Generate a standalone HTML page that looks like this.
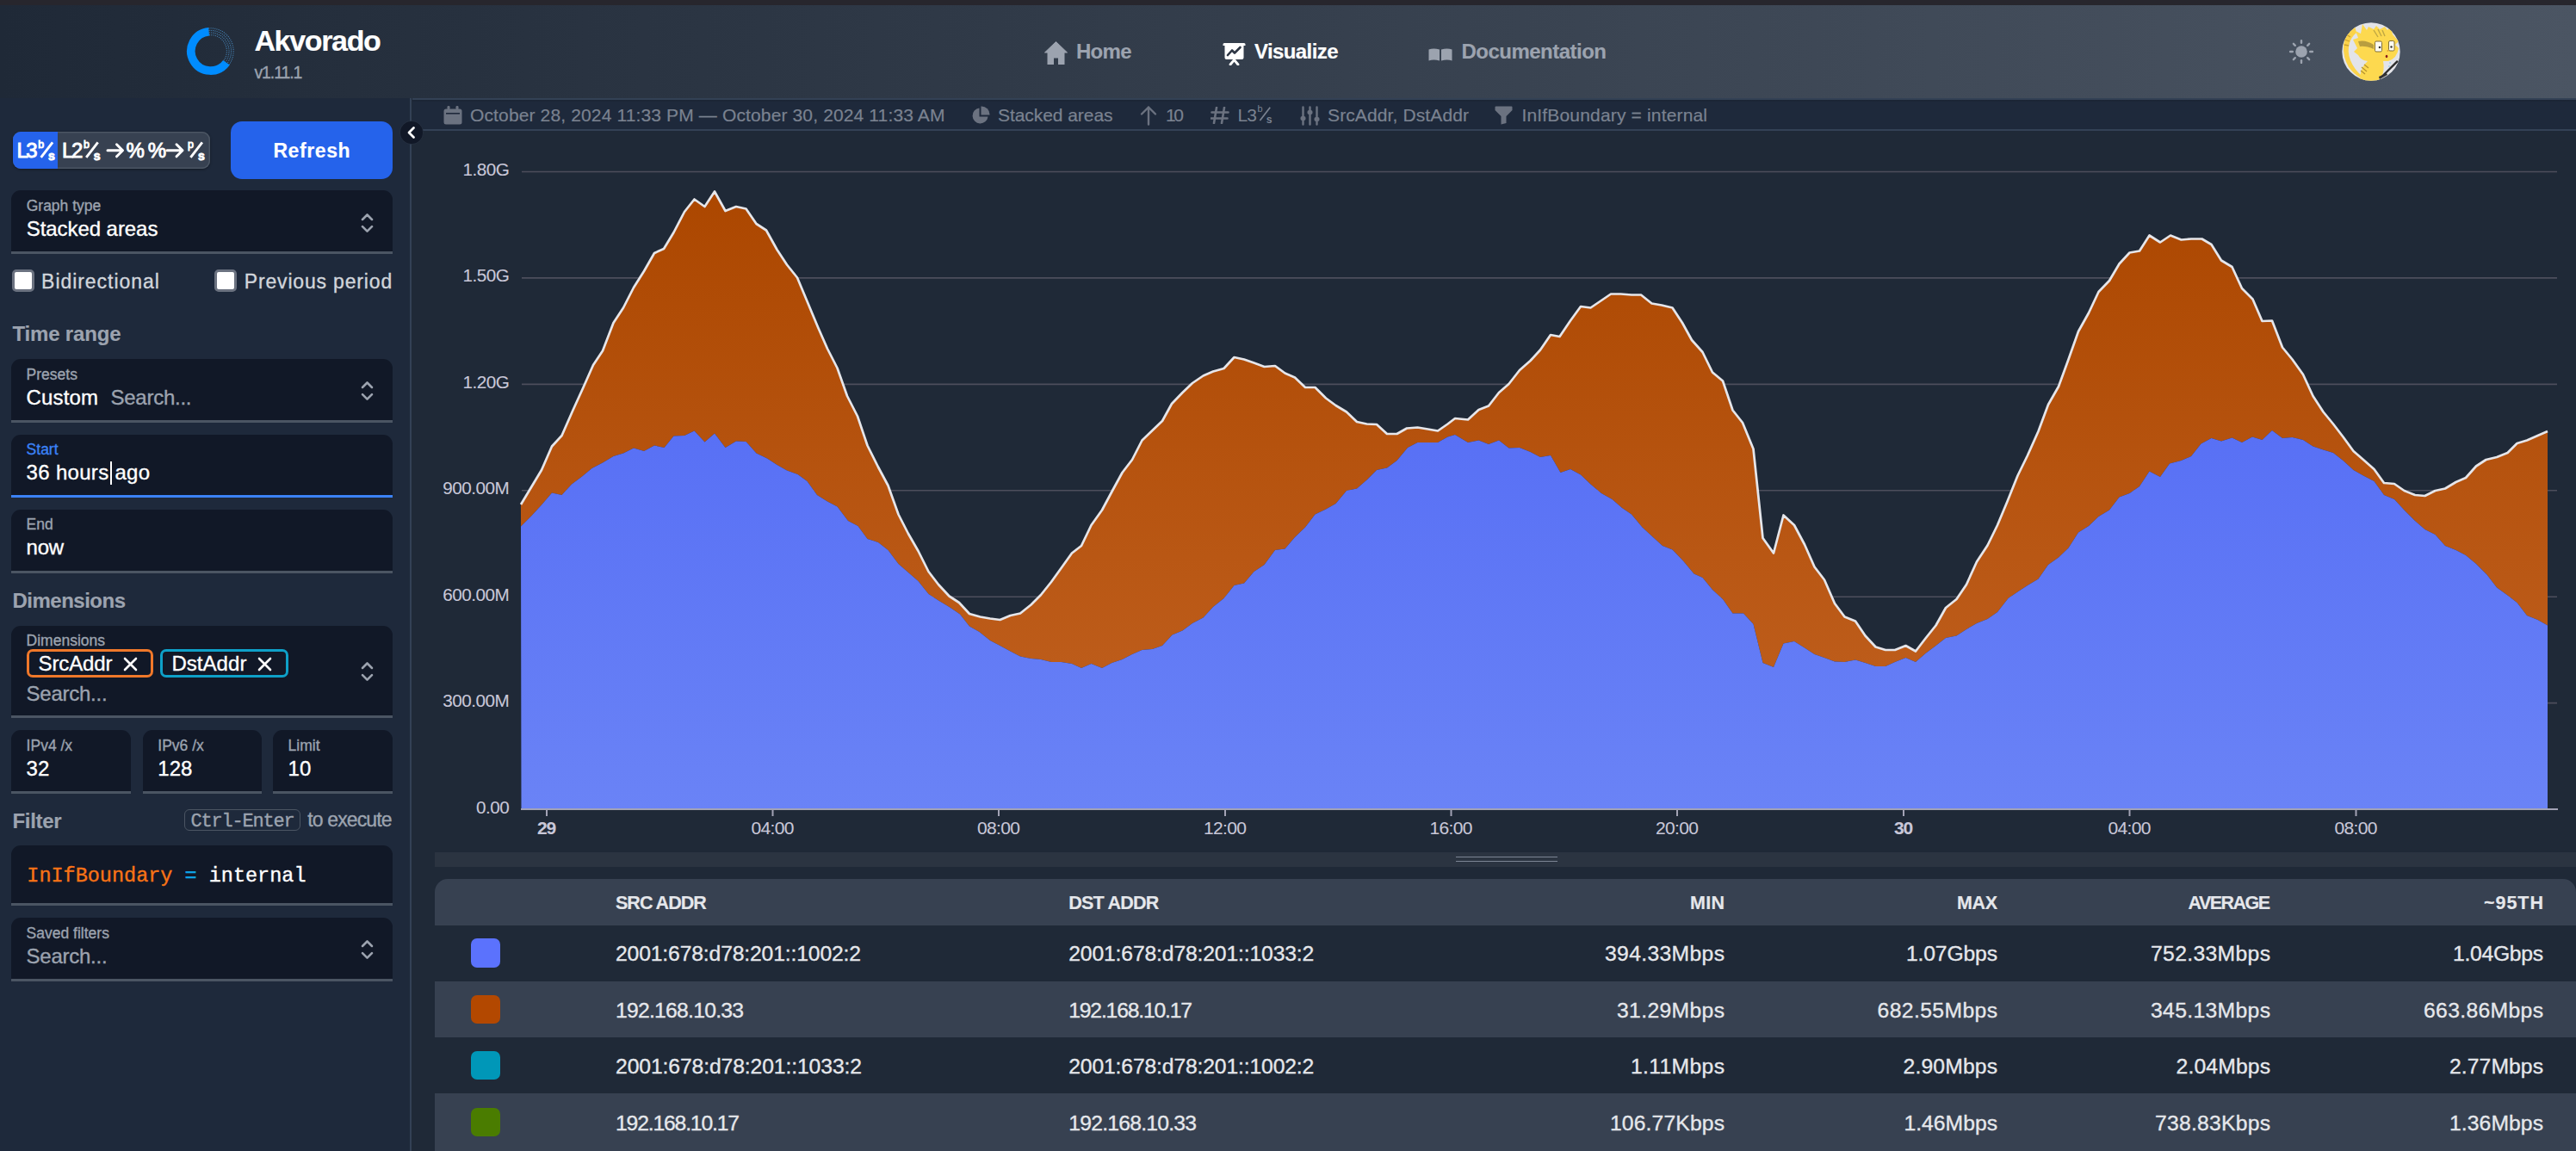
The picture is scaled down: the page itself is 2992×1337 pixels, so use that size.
<!DOCTYPE html><html><head><meta charset="utf-8"><title>Akvorado</title><style>html,body{margin:0;padding:0;width:2992px;height:1337px;overflow:hidden;background:#1f2937;font-family:"Liberation Sans",sans-serif;}.a{position:absolute;}.t{position:absolute;white-space:nowrap;}</style></head><body>
<div class="a" style="left:0.00px;top:0.00px;width:2992.00px;height:6.00px;background:#27262d;"></div>
<div class="a" style="left:0.00px;top:6.00px;width:2992.00px;height:108.00px;background:linear-gradient(to right,#1f2937,#4b5563);"></div>
<div class="a" style="left:0.00px;top:114.00px;width:477.00px;height:1223.00px;background:#1e293b;"></div>
<div class="a" style="left:476.00px;top:114.00px;width:2.20px;height:1223.00px;background:#334155;"></div>
<div class="a" style="left:479.00px;top:114.00px;width:2513.00px;height:36.00px;background:#1e293b;"></div>
<div class="a" style="left:479.00px;top:150.20px;width:2513.00px;height:1.50px;background:#334155;"></div>
<div class="a" style="left:479.00px;top:114.30px;width:2513.00px;height:1.30px;background:#334155;"></div>
<div class="a" style="left:479.00px;top:115.60px;width:2513.00px;height:3.90px;background:linear-gradient(to bottom,rgba(0,0,0,0.13),rgba(0,0,0,0));"></div>
<svg class="a" style="left:170.00px;top:20.00px;" width="150.00" height="80.00" viewBox="0 0 150 80"><path d="M92.96,52.74 A22.7,22.7 0 1 1 72.62,16.79" fill="none" stroke="#008cff" stroke-width="9.6"/><path d="M72.96,20.67 A18.8,18.8 0 0 1 89.81,50.45" fill="none" stroke="#4f9ad6" stroke-opacity="0.75" stroke-width="1.1" stroke-dasharray="1.1 1.2"/><path d="M72.73,18.08 A21.4,21.4 0 0 1 91.91,51.98" fill="none" stroke="#4f9ad6" stroke-opacity="0.75" stroke-width="1.1" stroke-dasharray="1.1 1.2"/><path d="M72.51,15.49 A24.0,24.0 0 0 1 94.02,53.51" fill="none" stroke="#4f9ad6" stroke-opacity="0.75" stroke-width="1.1" stroke-dasharray="1.1 1.2"/><path d="M72.28,12.90 A26.6,26.6 0 0 1 96.12,55.04" fill="none" stroke="#4f9ad6" stroke-opacity="0.75" stroke-width="1.1" stroke-dasharray="1.1 1.2"/></svg>
<svg class="a" style="left:1213.00px;top:47.50px;" width="27.00" height="27.50" viewBox="0 0 27 27.5"><path d="M13.5 0.5 L26.5 13 L23 13 L23 27 L16.5 27 L16.5 19 L10.5 19 L10.5 27 L4 27 L4 13 L0.5 13 Z" fill="#9ca3af" stroke="#9ca3af" stroke-width="1" stroke-linejoin="round"/></svg>
<svg class="a" style="left:1419.50px;top:49.50px;" width="27.00" height="26.00" viewBox="0 0 27 26"><path d="M0.5 1.5 Q0.5 0 2 0 L25 0 Q26.5 0 26.5 1.5 L26.5 3 L24.5 3 L24.5 17 Q24.5 19 22.5 19 L4.5 19 Q2.5 19 2.5 17 L2.5 3 L0.5 3 Z" fill="#ffffff"/><path d="M6 14 L11 8.5 L14 11.5 L20.5 5" fill="none" stroke="#2d3644" stroke-width="2.6" stroke-linecap="round" stroke-linejoin="round"/><path d="M9 25 L13.5 19.5 L18 25" fill="none" stroke="#ffffff" stroke-width="2.8" stroke-linecap="round"/></svg>
<svg class="a" style="left:1659.00px;top:56.00px;" width="28.00" height="15.00" viewBox="0 0 28 15"><path d="M0.5 1.5 Q6 -0.5 13 1.5 L13 14.5 Q6 12.5 0.5 14.5 Z M15 1.5 Q22 -0.5 27.5 1.5 L27.5 14.5 Q22 12.5 15 14.5 Z" fill="#9ca3af"/></svg>
<svg class="a" style="left:2657.70px;top:44.70px;" width="30.00" height="30.00" viewBox="0 0 30 30"><circle cx="15" cy="15" r="6.8" fill="#9ca3af"/><line x1="15.00" y1="4.80" x2="15.00" y2="2.10" stroke="#9ca3af" stroke-width="2.4" stroke-linecap="round"/><line x1="22.21" y1="7.79" x2="24.12" y2="5.88" stroke="#9ca3af" stroke-width="2.4" stroke-linecap="round"/><line x1="25.20" y1="15.00" x2="27.90" y2="15.00" stroke="#9ca3af" stroke-width="2.4" stroke-linecap="round"/><line x1="22.21" y1="22.21" x2="24.12" y2="24.12" stroke="#9ca3af" stroke-width="2.4" stroke-linecap="round"/><line x1="15.00" y1="25.20" x2="15.00" y2="27.90" stroke="#9ca3af" stroke-width="2.4" stroke-linecap="round"/><line x1="7.79" y1="22.21" x2="5.88" y2="24.12" stroke="#9ca3af" stroke-width="2.4" stroke-linecap="round"/><line x1="4.80" y1="15.00" x2="2.10" y2="15.00" stroke="#9ca3af" stroke-width="2.4" stroke-linecap="round"/><line x1="7.79" y1="7.79" x2="5.88" y2="5.88" stroke="#9ca3af" stroke-width="2.4" stroke-linecap="round"/></svg>
<svg class="a" style="left:2719.90px;top:26.00px;" width="68.00" height="68.00" viewBox="0 0 68 68"><defs><clipPath id="avc"><circle cx="34" cy="34" r="33.7"/></clipPath></defs><g clip-path="url(#avc)"><rect width="68" height="68" fill="#e3e4e9"/><path d="M15 4 Q4 12 2 26 Q1 40 8 52 Q14 60 21 64 L23 62 Q14 54 10 44 Q6 34 9 24 Q11 17 17 12 Z" fill="#fbd34a"/><path d="M5 14 L10 17 M3 20 L9 22 M3 26 L8 27" stroke="#c9a030" stroke-width="1.3"/><path d="M13 20 L19 18 L16 10 L22 13 L24 2 L29 9 L31 5 L37 8 L40 4 L44 8 L50 5 L53 9 L57 5 L59 14 L66 22 L62 26 L66 30 Q64 42 54 45 L30 45 Q22 44 19 38 L14 34 L18 30 Z" fill="#fdd94f"/><path d="M19 22 Q28 20 37 26 L37 31 Q28 27 21 28 Z" fill="#a08a3a" opacity="0.75"/><path d="M37 9 L42 17 M42 8 L46 16 M47 9 L50 16" stroke="#b09a40" stroke-width="1.4" opacity="0.8"/><path d="M21 64 Q22 52 30 45 L48 45 Q50 55 46 64 L42 68 L22 68 Z" fill="#fdd94f"/><path d="M22 56 L27 60 M23 52 L29 57 M26 49 L31 53" stroke="#b89530" stroke-width="1.4"/><rect x="38.5" y="22" width="8" height="12" rx="1.5" fill="#fffdf0" stroke="#6f5f30" stroke-width="0.9"/><rect x="54.5" y="21.5" width="6.5" height="11.5" rx="1.5" fill="#fffdf0" stroke="#6f5f30" stroke-width="0.9"/><circle cx="44" cy="29" r="1.3" fill="#333"/><circle cx="57.5" cy="28.5" r="1.2" fill="#333"/><circle cx="53.4" cy="33" r="0.9" fill="#e8a030"/><ellipse cx="52" cy="39.5" rx="1.3" ry="1.7" fill="#8b1a1a"/><circle cx="56" cy="47" r="0.8" fill="#7cc7ee"/><circle cx="55" cy="51" r="0.8" fill="#7cc7ee"/><circle cx="54" cy="55" r="0.8" fill="#7cc7ee"/><path d="M64 44 L66 45.5 L47 64 L43 65 Z" fill="#2b2b2b"/><path d="M43 63 L52 59 L53 61 L44 66 Z" fill="#333"/></g></svg>
<svg class="a" style="left:514.50px;top:122.50px;" width="22.00" height="22.00" viewBox="0 0 22 22"><path d="M3 3.5 L19 3.5 Q21.5 3.5 21.5 6 L21.5 19 Q21.5 21.5 19 21.5 L3 21.5 Q0.5 21.5 0.5 19 L0.5 6 Q0.5 3.5 3 3.5 Z" fill="#6b7280"/><rect x="4.5" y="0" width="3" height="6" rx="1.2" fill="#6b7280"/><rect x="14.5" y="0" width="3" height="6" rx="1.2" fill="#6b7280"/><rect x="3" y="8" width="16" height="1.6" fill="#1e293b"/></svg>
<svg class="a" style="left:1127.50px;top:122.50px;" width="22.00" height="22.00" viewBox="0 0 22 22"><path d="M9.5 2.5 A9 9 0 1 0 19.5 12.5 L9.5 12.5 Z" fill="#6b7280"/><path d="M11.5 0.5 A9.5 9.5 0 0 1 21.5 10.5 L11.5 10.5 Z" fill="#6b7280"/></svg>
<svg class="a" style="left:1324.00px;top:122.00px;" width="20.00" height="24.00" viewBox="0 0 20 24"><path d="M10 22.5 L10 2.5 M2 10.5 L10 2.5 L18 10.5" fill="none" stroke="#6b7280" stroke-width="2.4" stroke-linecap="round" stroke-linejoin="round"/></svg>
<svg class="a" style="left:1406.00px;top:124.00px;" width="22.00" height="20.00" viewBox="0 0 22 20"><path d="M7 1 L4 19 M16 1 L13 19 M1.5 6.5 L20.5 6.5 M0.5 13.5 L19.5 13.5" fill="none" stroke="#6b7280" stroke-width="2.6" stroke-linecap="round"/></svg>
<svg class="a" style="left:1510.00px;top:122.50px;" width="23.00" height="23.00" viewBox="0 0 23 23"><path d="M3.5 1.5 L3.5 21.5 M11.5 1.5 L11.5 21.5 M19.5 1.5 L19.5 21.5" stroke="#6b7280" stroke-width="2.4" stroke-linecap="round"/><rect x="0.5" y="12" width="6" height="5" rx="2" fill="#6b7280"/><rect x="8.5" y="5" width="6" height="5" rx="2" fill="#6b7280"/><rect x="16.5" y="13" width="6" height="5" rx="2" fill="#6b7280"/></svg>
<svg class="a" style="left:1736.00px;top:122.50px;" width="21.00" height="22.00" viewBox="0 0 21 22"><path d="M0.5 1.5 Q0.5 0.5 1.5 0.5 L19.5 0.5 Q20.5 0.5 20.5 1.5 L20.5 5 L13.5 12 L13.5 20 L7.5 21.5 L7.5 12 L0.5 5 Z" fill="#6b7280"/></svg>
<svg class="a" style="left:464.00px;top:140.00px;" width="28.00" height="28.00" viewBox="0 0 28 28"><circle cx="14" cy="14" r="13.6" fill="#111827" stroke="#3a4556" stroke-opacity="0.5" stroke-width="0.8"/><path d="M16.5 8.5 L11 14 L16.5 19.5" fill="none" stroke="#fff" stroke-width="2.8" stroke-linecap="round" stroke-linejoin="round"/></svg>
<div class="a" style="left:14.6px;top:152.9px;width:229px;height:42.7px;border-radius:9px;background:#374151;box-shadow:inset 0 0 0 1.5px #4b5563,0 1px 3px rgba(0,0,0,0.4);overflow:hidden"><div class="a" style="left:0;top:0;width:52.8px;height:42.7px;background:#2563eb"></div></div>
<div class="a" style="left:268px;top:140.7px;width:188px;height:67px;border-radius:13px;background:#2563eb"></div>
<div class="a" style="left:13.3px;top:221.2px;width:442.7px;height:70.80000000000001px;background:#111827;border-radius:11px 11px 0 0;border-bottom:3px solid #4b5563"></div>
<svg class="a" style="left:418.50px;top:246.50px;" width="15.00" height="24.20" viewBox="0 0 15 24.2"><path d="M2 8 L7.5 2.5 L13 8 M2 16.2 L7.5 21.7 L13 16.2" fill="none" stroke="#9ca3af" stroke-width="2.6" stroke-linecap="round" stroke-linejoin="round"/></svg>
<div class="a" style="left:14px;top:312.5px;width:20px;height:20px;background:#ffffff;border:3px solid #6b7280;border-radius:5px"></div>
<div class="a" style="left:249.4px;top:312.5px;width:20px;height:20px;background:#ffffff;border:3px solid #6b7280;border-radius:5px"></div>
<div class="a" style="left:13.3px;top:417px;width:442.7px;height:70.69999999999999px;background:#111827;border-radius:11px 11px 0 0;border-bottom:3px solid #4b5563"></div>
<svg class="a" style="left:418.50px;top:441.50px;" width="15.00" height="24.20" viewBox="0 0 15 24.2"><path d="M2 8 L7.5 2.5 L13 8 M2 16.2 L7.5 21.7 L13 16.2" fill="none" stroke="#9ca3af" stroke-width="2.6" stroke-linecap="round" stroke-linejoin="round"/></svg>
<div class="a" style="left:13.3px;top:504.6px;width:442.7px;height:70.09999999999994px;background:#111827;border-radius:11px 11px 0 0;border-bottom:3.6px solid #3b82f6"></div>
<div class="a" style="left:128.00px;top:536.00px;width:1.80px;height:27.00px;background:#ffffff;"></div>
<div class="a" style="left:13.3px;top:592.2px;width:442.7px;height:70.79999999999995px;background:#111827;border-radius:11px 11px 0 0;border-bottom:3px solid #4b5563"></div>
<div class="a" style="left:13.3px;top:727.3px;width:442.7px;height:103.5px;background:#111827;border-radius:11px 11px 0 0;border-bottom:3px solid #4b5563"></div>
<div class="a" style="left:30.6px;top:753.7px;width:141.4px;height:27.3px;border:3px solid #f0782a;border-radius:7px"></div>
<svg class="a" style="left:143.00px;top:763.00px;" width="17.00" height="17.00" viewBox="0 0 17 17"><path d="M2 2 L15 15 M15 2 L2 15" stroke="#ffffff" stroke-width="2.6" stroke-linecap="round"/></svg>
<div class="a" style="left:185.5px;top:753.7px;width:143px;height:27.3px;border:3px solid #0ea0c8;border-radius:7px"></div>
<svg class="a" style="left:298.50px;top:763.00px;" width="17.00" height="17.00" viewBox="0 0 17 17"><path d="M2 2 L15 15 M15 2 L2 15" stroke="#ffffff" stroke-width="2.6" stroke-linecap="round"/></svg>
<svg class="a" style="left:418.50px;top:768.40px;" width="15.00" height="24.20" viewBox="0 0 15 24.2"><path d="M2 8 L7.5 2.5 L13 8 M2 16.2 L7.5 21.7 L13 16.2" fill="none" stroke="#9ca3af" stroke-width="2.6" stroke-linecap="round" stroke-linejoin="round"/></svg>
<div class="a" style="left:13.3px;top:848.2px;width:139.1px;height:70.79999999999995px;background:#111827;border-radius:11px 11px 0 0;border-bottom:3px solid #4b5563"></div>
<div class="a" style="left:166px;top:848.2px;width:138px;height:70.79999999999995px;background:#111827;border-radius:11px 11px 0 0;border-bottom:3px solid #4b5563"></div>
<div class="a" style="left:317.3px;top:848.2px;width:138.7px;height:70.79999999999995px;background:#111827;border-radius:11px 11px 0 0;border-bottom:3px solid #4b5563"></div>
<div class="a" style="left:213.6px;top:939.5px;width:133.8px;height:23.1px;border:1.5px solid #4b5563;border-radius:6px"></div>
<div class="a" style="left:13.3px;top:982.1px;width:442.7px;height:67.19999999999993px;background:#111827;border-radius:11px 11px 0 0;border-bottom:3px solid #4b5563"></div>
<div class="a" style="left:13.3px;top:1065.7px;width:442.7px;height:70.89999999999986px;background:#111827;border-radius:11px 11px 0 0;border-bottom:3px solid #4b5563"></div>
<svg class="a" style="left:418.50px;top:1091.00px;" width="15.00" height="24.20" viewBox="0 0 15 24.2"><path d="M2 8 L7.5 2.5 L13 8 M2 16.2 L7.5 21.7 L13 16.2" fill="none" stroke="#9ca3af" stroke-width="2.6" stroke-linecap="round" stroke-linejoin="round"/></svg>
<svg class="a" style="left:0.00px;top:0.00px;" width="2992.00" height="1337.00" viewBox="0 0 2992 1337"><defs><linearGradient id="gb" x1="0" y1="0" x2="0" y2="1"><stop offset="0" stop-color="#5870f5"/><stop offset="1" stop-color="#6a83f6"/></linearGradient><linearGradient id="go" x1="0" y1="0" x2="0" y2="1"><stop offset="0" stop-color="#ac4700"/><stop offset="1" stop-color="#bd5c1a"/></linearGradient></defs><line x1="606" y1="199.50" x2="2970" y2="199.50" stroke="#4d4e5c" stroke-width="1.6"/><line x1="606" y1="322.92" x2="2970" y2="322.92" stroke="#4d4e5c" stroke-width="1.6"/><line x1="606" y1="446.34" x2="2970" y2="446.34" stroke="#4d4e5c" stroke-width="1.6"/><line x1="606" y1="569.76" x2="2970" y2="569.76" stroke="#4d4e5c" stroke-width="1.6"/><line x1="606" y1="693.18" x2="2970" y2="693.18" stroke="#4d4e5c" stroke-width="1.6"/><line x1="606" y1="816.60" x2="2970" y2="816.60" stroke="#4d4e5c" stroke-width="1.6"/><path d="M605.0,586.0 L629.0,546.0 L641.0,518.5 L652.5,506.0 L665.0,477.5 L677.5,450.0 L689.0,424.0 L700.0,407.5 L712.5,375.0 L724.0,357.5 L736.0,334.0 L748.0,315.0 L760.0,294.0 L771.0,289.0 L782.5,270.0 L795.0,246.0 L806.5,231.5 L818.5,240.0 L830.0,222.5 L842.5,245.0 L855.0,240.0 L866.5,242.5 L878.5,260.0 L890.0,267.5 L902.5,290.0 L914.0,307.5 L926.0,322.5 L937.5,350.0 L950.0,380.0 L961.0,405.0 L972.5,427.5 L984.0,460.0 L996.0,483.5 L1007.5,517.5 L1020.0,542.5 L1031.5,564.0 L1043.5,597.5 L1055.0,620.0 L1066.5,640.0 L1078.5,664.0 L1090.0,679.0 L1102.5,692.5 L1114.0,700.0 L1126.0,713.0 L1138.5,716.5 L1150.0,718.5 L1161.5,720.0 L1173.5,715.0 L1185.0,712.5 L1197.5,702.5 L1209.0,691.0 L1221.0,676.0 L1232.5,660.0 L1245.0,642.5 L1256.0,634.0 L1267.5,610.0 L1280.0,592.5 L1291.5,571.0 L1303.5,549.0 L1315.0,534.0 L1326.5,511.5 L1338.5,500.0 L1350.0,489.0 L1361.0,469.0 L1373.5,456.0 L1385.0,445.0 L1397.5,436.5 L1409.0,431.5 L1421.5,428.0 L1433.5,415.0 L1445.0,417.5 L1456.5,421.5 L1468.5,426.0 L1481.0,425.0 L1492.5,433.5 L1504.0,438.5 L1516.0,450.0 L1527.5,450.0 L1540.0,462.5 L1551.5,471.0 L1564.0,478.5 L1576.0,490.0 L1587.5,492.5 L1599.0,493.0 L1611.0,504.0 L1622.5,504.0 L1634.0,497.5 L1646.5,496.5 L1658.5,498.5 L1670.0,500.5 L1681.5,492.5 L1690.0,486.0 L1705.0,487.5 L1717.5,476.0 L1729.0,471.5 L1741.0,456.0 L1752.5,446.0 L1765.0,430.0 L1777.5,419.0 L1789.0,406.5 L1801.0,389.0 L1811.5,391.0 L1824.0,372.5 L1836.0,356.0 L1847.5,357.5 L1860.0,349.0 L1871.0,341.5 L1882.5,341.5 L1895.0,342.5 L1906.0,342.5 L1918.5,352.5 L1930.0,354.5 L1942.5,357.5 L1954.0,375.0 L1965.0,395.0 L1977.5,409.0 L1989.0,432.5 L2001.0,442.5 L2012.5,476.5 L2024.0,491.0 L2036.5,521.5 L2047.5,625.0 L2060.0,642.5 L2071.5,598.5 L2084.0,610.0 L2096.0,632.5 L2107.5,658.5 L2119.0,673.5 L2131.0,701.0 L2142.5,716.5 L2155.0,721.5 L2166.5,738.5 L2178.5,751.5 L2190.0,755.0 L2201.0,755.0 L2213.5,750.0 L2225.0,756.5 L2236.5,741.5 L2248.5,726.5 L2260.0,706.0 L2272.5,696.0 L2284.0,679.0 L2296.0,652.5 L2308.5,633.5 L2320.0,610.0 L2331.5,582.5 L2343.5,552.5 L2355.0,529.0 L2367.5,501.0 L2379.0,470.0 L2391.0,449.0 L2402.5,417.5 L2414.0,385.0 L2426.0,363.5 L2437.5,339.0 L2450.0,326.0 L2461.5,306.5 L2473.5,293.5 L2485.0,291.5 L2496.5,273.5 L2509.0,281.5 L2521.0,273.5 L2533.5,278.5 L2545.0,277.5 L2557.5,277.5 L2568.5,284.0 L2580.0,302.5 L2592.5,310.0 L2604.0,335.0 L2616.5,347.5 L2627.5,373.0 L2639.0,372.5 L2651.0,403.5 L2662.5,417.5 L2675.0,435.0 L2686.5,460.0 L2698.5,478.5 L2710.0,492.5 L2721.5,507.5 L2733.5,524.0 L2745.0,534.0 L2757.5,545.0 L2769.0,561.0 L2781.0,562.0 L2792.5,570.0 L2805.0,575.0 L2816.5,576.0 L2828.5,570.0 L2840.0,567.5 L2852.5,560.0 L2864.0,555.0 L2876.0,541.5 L2887.5,534.0 L2900.0,531.0 L2912.5,526.0 L2923.5,515.0 L2935.0,511.5 L2947.5,506.0 L2959.0,501.0 L2959.0,726.5 L2947.5,720.0 L2935.0,715.0 L2923.5,700.0 L2912.5,691.5 L2900.0,682.5 L2888.5,667.5 L2876.0,655.0 L2864.0,645.0 L2852.5,639.0 L2840.0,634.0 L2828.5,621.0 L2816.5,615.0 L2805.0,605.0 L2792.5,592.5 L2781.0,580.0 L2769.0,575.0 L2757.5,559.0 L2745.0,552.5 L2733.5,546.0 L2721.5,535.0 L2710.0,526.0 L2698.5,522.5 L2686.5,518.5 L2675.0,511.0 L2662.5,508.0 L2651.0,509.0 L2639.0,500.0 L2627.5,511.0 L2616.0,507.5 L2604.0,514.0 L2592.5,508.5 L2580.0,512.5 L2568.5,509.0 L2556.5,515.5 L2545.0,530.0 L2533.5,535.0 L2520.0,538.5 L2509.0,554.0 L2496.5,547.5 L2485.0,565.0 L2473.5,573.0 L2461.5,577.5 L2450.0,592.5 L2437.5,600.0 L2426.0,611.0 L2414.0,618.5 L2402.5,636.5 L2391.0,647.5 L2379.0,656.0 L2367.5,672.5 L2355.0,680.0 L2343.5,687.5 L2332.5,695.0 L2320.0,711.0 L2308.5,719.0 L2296.0,724.0 L2284.0,731.0 L2272.5,738.5 L2260.0,741.0 L2248.5,750.0 L2236.5,759.0 L2225.0,769.0 L2213.5,764.0 L2201.0,769.0 L2190.0,774.0 L2178.5,774.0 L2166.5,770.0 L2155.0,766.5 L2142.5,769.0 L2131.0,768.5 L2119.0,764.0 L2107.5,760.0 L2096.0,752.5 L2084.0,745.0 L2071.5,747.5 L2060.0,775.0 L2047.5,770.0 L2036.5,725.0 L2025.0,712.5 L2012.5,712.5 L2001.0,696.0 L1989.0,685.0 L1977.5,671.0 L1967.5,666.5 L1955.0,651.5 L1942.5,638.5 L1931.0,634.0 L1920.0,624.0 L1907.5,612.5 L1895.0,597.5 L1884.0,590.0 L1872.5,580.0 L1860.0,573.0 L1847.5,562.5 L1836.0,551.5 L1824.0,545.0 L1812.5,549.0 L1801.0,529.0 L1789.0,531.0 L1777.5,525.0 L1765.0,520.0 L1752.5,520.5 L1741.0,511.5 L1729.0,516.0 L1717.5,511.5 L1705.0,514.0 L1690.0,505.0 L1681.5,507.5 L1670.0,514.0 L1658.5,514.0 L1646.5,514.0 L1635.0,520.0 L1622.5,535.0 L1611.0,543.5 L1599.0,546.0 L1587.5,557.5 L1576.0,567.5 L1564.0,570.0 L1551.5,585.0 L1540.0,591.5 L1527.5,597.5 L1516.0,612.5 L1504.0,624.0 L1492.5,637.5 L1481.0,639.0 L1468.5,656.0 L1456.5,664.0 L1445.0,677.5 L1433.5,680.0 L1421.5,695.0 L1409.0,705.0 L1397.5,717.5 L1385.0,724.0 L1373.5,732.5 L1361.5,737.5 L1350.0,750.0 L1338.5,754.0 L1326.5,755.0 L1315.0,760.0 L1303.5,766.0 L1291.5,770.0 L1280.0,776.0 L1267.5,771.0 L1256.0,776.0 L1245.0,771.0 L1232.5,769.0 L1221.0,769.0 L1209.0,766.0 L1197.5,765.0 L1185.0,762.5 L1173.5,756.5 L1161.5,750.0 L1150.0,744.0 L1137.5,734.0 L1126.0,727.5 L1115.0,713.5 L1102.5,705.0 L1090.0,697.5 L1078.5,690.0 L1066.5,675.0 L1055.0,665.0 L1043.5,655.0 L1031.5,639.0 L1020.0,630.0 L1007.5,626.0 L996.5,611.0 L985.0,605.0 L972.5,588.5 L961.0,582.5 L949.0,575.0 L937.5,559.0 L926.5,551.0 L914.0,546.5 L902.5,540.0 L891.0,532.5 L878.5,526.5 L866.5,513.0 L855.0,512.5 L842.5,520.0 L830.0,503.5 L818.5,513.5 L806.5,500.5 L795.0,506.0 L782.5,506.5 L771.5,520.0 L760.0,517.5 L748.0,524.0 L736.0,520.5 L724.0,526.5 L712.5,530.0 L700.0,537.5 L687.5,544.0 L676.0,553.5 L664.0,562.5 L652.5,575.0 L641.0,572.5 L629.0,586.5 L617.5,599.0 L605.0,611.5 Z" fill="url(#go)"/><path d="M605.0,611.5 L617.5,599.0 L629.0,586.5 L641.0,572.5 L652.5,575.0 L664.0,562.5 L676.0,553.5 L687.5,544.0 L700.0,537.5 L712.5,530.0 L724.0,526.5 L736.0,520.5 L748.0,524.0 L760.0,517.5 L771.5,520.0 L782.5,506.5 L795.0,506.0 L806.5,500.5 L818.5,513.5 L830.0,503.5 L842.5,520.0 L855.0,512.5 L866.5,513.0 L878.5,526.5 L891.0,532.5 L902.5,540.0 L914.0,546.5 L926.5,551.0 L937.5,559.0 L949.0,575.0 L961.0,582.5 L972.5,588.5 L985.0,605.0 L996.5,611.0 L1007.5,626.0 L1020.0,630.0 L1031.5,639.0 L1043.5,655.0 L1055.0,665.0 L1066.5,675.0 L1078.5,690.0 L1090.0,697.5 L1102.5,705.0 L1115.0,713.5 L1126.0,727.5 L1137.5,734.0 L1150.0,744.0 L1161.5,750.0 L1173.5,756.5 L1185.0,762.5 L1197.5,765.0 L1209.0,766.0 L1221.0,769.0 L1232.5,769.0 L1245.0,771.0 L1256.0,776.0 L1267.5,771.0 L1280.0,776.0 L1291.5,770.0 L1303.5,766.0 L1315.0,760.0 L1326.5,755.0 L1338.5,754.0 L1350.0,750.0 L1361.5,737.5 L1373.5,732.5 L1385.0,724.0 L1397.5,717.5 L1409.0,705.0 L1421.5,695.0 L1433.5,680.0 L1445.0,677.5 L1456.5,664.0 L1468.5,656.0 L1481.0,639.0 L1492.5,637.5 L1504.0,624.0 L1516.0,612.5 L1527.5,597.5 L1540.0,591.5 L1551.5,585.0 L1564.0,570.0 L1576.0,567.5 L1587.5,557.5 L1599.0,546.0 L1611.0,543.5 L1622.5,535.0 L1635.0,520.0 L1646.5,514.0 L1658.5,514.0 L1670.0,514.0 L1681.5,507.5 L1690.0,505.0 L1705.0,514.0 L1717.5,511.5 L1729.0,516.0 L1741.0,511.5 L1752.5,520.5 L1765.0,520.0 L1777.5,525.0 L1789.0,531.0 L1801.0,529.0 L1812.5,549.0 L1824.0,545.0 L1836.0,551.5 L1847.5,562.5 L1860.0,573.0 L1872.5,580.0 L1884.0,590.0 L1895.0,597.5 L1907.5,612.5 L1920.0,624.0 L1931.0,634.0 L1942.5,638.5 L1955.0,651.5 L1967.5,666.5 L1977.5,671.0 L1989.0,685.0 L2001.0,696.0 L2012.5,712.5 L2025.0,712.5 L2036.5,725.0 L2047.5,770.0 L2060.0,775.0 L2071.5,747.5 L2084.0,745.0 L2096.0,752.5 L2107.5,760.0 L2119.0,764.0 L2131.0,768.5 L2142.5,769.0 L2155.0,766.5 L2166.5,770.0 L2178.5,774.0 L2190.0,774.0 L2201.0,769.0 L2213.5,764.0 L2225.0,769.0 L2236.5,759.0 L2248.5,750.0 L2260.0,741.0 L2272.5,738.5 L2284.0,731.0 L2296.0,724.0 L2308.5,719.0 L2320.0,711.0 L2332.5,695.0 L2343.5,687.5 L2355.0,680.0 L2367.5,672.5 L2379.0,656.0 L2391.0,647.5 L2402.5,636.5 L2414.0,618.5 L2426.0,611.0 L2437.5,600.0 L2450.0,592.5 L2461.5,577.5 L2473.5,573.0 L2485.0,565.0 L2496.5,547.5 L2509.0,554.0 L2520.0,538.5 L2533.5,535.0 L2545.0,530.0 L2556.5,515.5 L2568.5,509.0 L2580.0,512.5 L2592.5,508.5 L2604.0,514.0 L2616.0,507.5 L2627.5,511.0 L2639.0,500.0 L2651.0,509.0 L2662.5,508.0 L2675.0,511.0 L2686.5,518.5 L2698.5,522.5 L2710.0,526.0 L2721.5,535.0 L2733.5,546.0 L2745.0,552.5 L2757.5,559.0 L2769.0,575.0 L2781.0,580.0 L2792.5,592.5 L2805.0,605.0 L2816.5,615.0 L2828.5,621.0 L2840.0,634.0 L2852.5,639.0 L2864.0,645.0 L2876.0,655.0 L2888.5,667.5 L2900.0,682.5 L2912.5,691.5 L2923.5,700.0 L2935.0,715.0 L2947.5,720.0 L2959.0,726.5 L2959,940 L605.5,940 Z" fill="url(#gb)"/><path d="M605.0,586.0 L629.0,546.0 L641.0,518.5 L652.5,506.0 L665.0,477.5 L677.5,450.0 L689.0,424.0 L700.0,407.5 L712.5,375.0 L724.0,357.5 L736.0,334.0 L748.0,315.0 L760.0,294.0 L771.0,289.0 L782.5,270.0 L795.0,246.0 L806.5,231.5 L818.5,240.0 L830.0,222.5 L842.5,245.0 L855.0,240.0 L866.5,242.5 L878.5,260.0 L890.0,267.5 L902.5,290.0 L914.0,307.5 L926.0,322.5 L937.5,350.0 L950.0,380.0 L961.0,405.0 L972.5,427.5 L984.0,460.0 L996.0,483.5 L1007.5,517.5 L1020.0,542.5 L1031.5,564.0 L1043.5,597.5 L1055.0,620.0 L1066.5,640.0 L1078.5,664.0 L1090.0,679.0 L1102.5,692.5 L1114.0,700.0 L1126.0,713.0 L1138.5,716.5 L1150.0,718.5 L1161.5,720.0 L1173.5,715.0 L1185.0,712.5 L1197.5,702.5 L1209.0,691.0 L1221.0,676.0 L1232.5,660.0 L1245.0,642.5 L1256.0,634.0 L1267.5,610.0 L1280.0,592.5 L1291.5,571.0 L1303.5,549.0 L1315.0,534.0 L1326.5,511.5 L1338.5,500.0 L1350.0,489.0 L1361.0,469.0 L1373.5,456.0 L1385.0,445.0 L1397.5,436.5 L1409.0,431.5 L1421.5,428.0 L1433.5,415.0 L1445.0,417.5 L1456.5,421.5 L1468.5,426.0 L1481.0,425.0 L1492.5,433.5 L1504.0,438.5 L1516.0,450.0 L1527.5,450.0 L1540.0,462.5 L1551.5,471.0 L1564.0,478.5 L1576.0,490.0 L1587.5,492.5 L1599.0,493.0 L1611.0,504.0 L1622.5,504.0 L1634.0,497.5 L1646.5,496.5 L1658.5,498.5 L1670.0,500.5 L1681.5,492.5 L1690.0,486.0 L1705.0,487.5 L1717.5,476.0 L1729.0,471.5 L1741.0,456.0 L1752.5,446.0 L1765.0,430.0 L1777.5,419.0 L1789.0,406.5 L1801.0,389.0 L1811.5,391.0 L1824.0,372.5 L1836.0,356.0 L1847.5,357.5 L1860.0,349.0 L1871.0,341.5 L1882.5,341.5 L1895.0,342.5 L1906.0,342.5 L1918.5,352.5 L1930.0,354.5 L1942.5,357.5 L1954.0,375.0 L1965.0,395.0 L1977.5,409.0 L1989.0,432.5 L2001.0,442.5 L2012.5,476.5 L2024.0,491.0 L2036.5,521.5 L2047.5,625.0 L2060.0,642.5 L2071.5,598.5 L2084.0,610.0 L2096.0,632.5 L2107.5,658.5 L2119.0,673.5 L2131.0,701.0 L2142.5,716.5 L2155.0,721.5 L2166.5,738.5 L2178.5,751.5 L2190.0,755.0 L2201.0,755.0 L2213.5,750.0 L2225.0,756.5 L2236.5,741.5 L2248.5,726.5 L2260.0,706.0 L2272.5,696.0 L2284.0,679.0 L2296.0,652.5 L2308.5,633.5 L2320.0,610.0 L2331.5,582.5 L2343.5,552.5 L2355.0,529.0 L2367.5,501.0 L2379.0,470.0 L2391.0,449.0 L2402.5,417.5 L2414.0,385.0 L2426.0,363.5 L2437.5,339.0 L2450.0,326.0 L2461.5,306.5 L2473.5,293.5 L2485.0,291.5 L2496.5,273.5 L2509.0,281.5 L2521.0,273.5 L2533.5,278.5 L2545.0,277.5 L2557.5,277.5 L2568.5,284.0 L2580.0,302.5 L2592.5,310.0 L2604.0,335.0 L2616.5,347.5 L2627.5,373.0 L2639.0,372.5 L2651.0,403.5 L2662.5,417.5 L2675.0,435.0 L2686.5,460.0 L2698.5,478.5 L2710.0,492.5 L2721.5,507.5 L2733.5,524.0 L2745.0,534.0 L2757.5,545.0 L2769.0,561.0 L2781.0,562.0 L2792.5,570.0 L2805.0,575.0 L2816.5,576.0 L2828.5,570.0 L2840.0,567.5 L2852.5,560.0 L2864.0,555.0 L2876.0,541.5 L2887.5,534.0 L2900.0,531.0 L2912.5,526.0 L2923.5,515.0 L2935.0,511.5 L2947.5,506.0 L2959.0,501.0" fill="none" stroke="#e6e6ea" stroke-width="2.7" stroke-linejoin="round"/><line x1="605" y1="940" x2="2971" y2="940" stroke="#a3a3b5" stroke-width="2"/><line x1="635" y1="940" x2="635" y2="948" stroke="#a3a3b5" stroke-width="2"/><line x1="897.5" y1="940" x2="897.5" y2="948" stroke="#a3a3b5" stroke-width="2"/><line x1="1160" y1="940" x2="1160" y2="948" stroke="#a3a3b5" stroke-width="2"/><line x1="1423" y1="940" x2="1423" y2="948" stroke="#a3a3b5" stroke-width="2"/><line x1="1685.5" y1="940" x2="1685.5" y2="948" stroke="#a3a3b5" stroke-width="2"/><line x1="1948" y1="940" x2="1948" y2="948" stroke="#a3a3b5" stroke-width="2"/><line x1="2211" y1="940" x2="2211" y2="948" stroke="#a3a3b5" stroke-width="2"/><line x1="2473.5" y1="940" x2="2473.5" y2="948" stroke="#a3a3b5" stroke-width="2"/><line x1="2736.5" y1="940" x2="2736.5" y2="948" stroke="#a3a3b5" stroke-width="2"/></svg>
<div class="a" style="left:505.00px;top:990.00px;width:2487.00px;height:16.50px;background:#2b3441;"></div>
<div class="a" style="left:1691.00px;top:995.20px;width:118.00px;height:1.20px;background:#7c8594;"></div>
<div class="a" style="left:1691.00px;top:1000.20px;width:118.00px;height:1.20px;background:#7c8594;"></div>
<div class="a" style="left:505px;top:1020.5px;width:2487px;height:316.5px;border-radius:15px 15px 0 0;overflow:hidden;background:#1f2937">
<div class="a" style="left:0;top:0;width:2500px;height:54px;background:#374151"></div>
<div class="a" style="left:0;top:54.00px;width:2500px;height:65.00px;background:#1f2937"></div>
<div class="a" style="left:0;top:119.00px;width:2500px;height:65.80px;background:#374151"></div>
<div class="a" style="left:0;top:184.80px;width:2500px;height:64.70px;background:#1f2937"></div>
<div class="a" style="left:0;top:249.50px;width:2500px;height:67.00px;background:#374151"></div>
</div>
<div class="a" style="left:547px;top:1090.20px;width:33.8px;height:33.5px;border-radius:7px;background:#5b72fd"></div>
<div class="a" style="left:547px;top:1155.60px;width:33.8px;height:33.5px;border-radius:7px;background:#b34800"></div>
<div class="a" style="left:547px;top:1220.85px;width:33.8px;height:33.5px;border-radius:7px;background:#0097b8"></div>
<div class="a" style="left:547px;top:1286.70px;width:33.8px;height:33.5px;border-radius:7px;background:#4a7c00"></div>
<svg class="a" style="left:0;top:0" width="2992" height="1337"><text x="295.40" y="58.90" font-size="34" font-family="'Liberation Sans',sans-serif" font-weight="700" fill="#ffffff" text-anchor="start" textLength="147.50" lengthAdjust="spacing" stroke="#ffffff" stroke-width="0.15" style="white-space:pre;">Akvorado</text><text x="295.40" y="91.20" font-size="19.5" font-family="'Liberation Sans',sans-serif" font-weight="400" fill="#9ca3af" text-anchor="start" textLength="56.00" lengthAdjust="spacing" stroke="#9ca3af" stroke-width="0.35" style="white-space:pre;">v1.11.1</text><text x="1250.00" y="67.50" font-size="24" font-family="'Liberation Sans',sans-serif" font-weight="700" fill="#9ca3af" text-anchor="start" textLength="64.50" lengthAdjust="spacing" stroke="#9ca3af" stroke-width="0.15" style="white-space:pre;">Home</text><text x="1457.00" y="67.50" font-size="24" font-family="'Liberation Sans',sans-serif" font-weight="700" fill="#ffffff" text-anchor="start" textLength="97.50" lengthAdjust="spacing" stroke="#ffffff" stroke-width="0.15" style="white-space:pre;">Visualize</text><text x="1697.50" y="67.50" font-size="24" font-family="'Liberation Sans',sans-serif" font-weight="700" fill="#9ca3af" text-anchor="start" textLength="168.50" lengthAdjust="spacing" stroke="#9ca3af" stroke-width="0.15" style="white-space:pre;">Documentation</text><text x="546.00" y="140.50" font-size="21" font-family="'Liberation Sans',sans-serif" font-weight="400" fill="#7a8290" text-anchor="start" textLength="551.50" lengthAdjust="spacing" stroke="#7a8290" stroke-width="0.2" style="white-space:pre;">October 28, 2024 11:33 PM — October 30, 2024 11:33 AM</text><text x="1159.00" y="140.50" font-size="21" font-family="'Liberation Sans',sans-serif" font-weight="400" fill="#7a8290" text-anchor="start" textLength="133.50" lengthAdjust="spacing" stroke="#7a8290" stroke-width="0.2" style="white-space:pre;">Stacked areas</text><text x="1354.00" y="140.50" font-size="21" font-family="'Liberation Sans',sans-serif" font-weight="400" fill="#7a8290" text-anchor="start" textLength="21.00" lengthAdjust="spacing" stroke="#7a8290" stroke-width="0.2" style="white-space:pre;">10</text><text x="1437.50" y="140.50" font-size="21" font-family="'Liberation Sans',sans-serif" font-weight="400" fill="#7a8290" text-anchor="start" textLength="22.50" lengthAdjust="spacing" style="white-space:pre;">L3</text><text x="1460.53" y="130.26" font-size="10.9375" font-family="'Liberation Sans',sans-serif" font-weight="400" fill="#7a8290" text-anchor="start" style="white-space:pre;">b</text><line x1="1463.41" y1="140.06" x2="1475.22" y2="124.75" stroke="#7a8290" stroke-width="1.75"/><text x="1470.85" y="142.51" font-size="12.25" font-family="'Liberation Sans',sans-serif" font-weight="700" fill="#7a8290" text-anchor="start" style="white-space:pre;">s</text><text x="1542.00" y="140.50" font-size="21" font-family="'Liberation Sans',sans-serif" font-weight="400" fill="#7a8290" text-anchor="start" textLength="164.00" lengthAdjust="spacing" stroke="#7a8290" stroke-width="0.2" style="white-space:pre;">SrcAddr, DstAddr</text><text x="1767.50" y="140.50" font-size="21" font-family="'Liberation Sans',sans-serif" font-weight="400" fill="#7a8290" text-anchor="start" textLength="215.50" lengthAdjust="spacing" stroke="#7a8290" stroke-width="0.2" style="white-space:pre;">InIfBoundary = internal</text><text x="19.40" y="183.40" font-size="24" font-family="'Liberation Sans',sans-serif" font-weight="400" fill="#ffffff" text-anchor="start" textLength="24.30" lengthAdjust="spacing" stroke="#ffffff" stroke-width="0.9" style="white-space:pre;">L3</text><text x="44.30" y="171.70" font-size="12.5" font-family="'Liberation Sans',sans-serif" font-weight="400" fill="#ffffff" text-anchor="start" stroke="#ffffff" stroke-width="0.9" style="white-space:pre;">b</text><line x1="47.60" y1="182.90" x2="61.10" y2="165.40" stroke="#ffffff" stroke-width="2.90"/><text x="56.10" y="185.70" font-size="14.0" font-family="'Liberation Sans',sans-serif" font-weight="700" fill="#ffffff" text-anchor="start" stroke="#ffffff" stroke-width="0.9" style="white-space:pre;">s</text><text x="72.00" y="183.40" font-size="24" font-family="'Liberation Sans',sans-serif" font-weight="400" fill="#ffffff" text-anchor="start" textLength="24.30" lengthAdjust="spacing" stroke="#ffffff" stroke-width="0.9" style="white-space:pre;">L2</text><text x="96.90" y="171.70" font-size="12.5" font-family="'Liberation Sans',sans-serif" font-weight="400" fill="#ffffff" text-anchor="start" stroke="#ffffff" stroke-width="0.9" style="white-space:pre;">b</text><line x1="100.20" y1="182.90" x2="113.70" y2="165.40" stroke="#ffffff" stroke-width="2.90"/><text x="108.70" y="185.70" font-size="14.0" font-family="'Liberation Sans',sans-serif" font-weight="700" fill="#ffffff" text-anchor="start" stroke="#ffffff" stroke-width="0.9" style="white-space:pre;">s</text><path d="M125.00,174.80 L142.00,174.80 M135.50,167.80 L142.50,174.80 L135.50,181.80" fill="none" stroke="#ffffff" stroke-width="3.00" stroke-linecap="round" stroke-linejoin="round"/><text x="146.50" y="183.40" font-size="24" font-family="'Liberation Sans',sans-serif" font-weight="400" fill="#ffffff" text-anchor="start" stroke="#ffffff" stroke-width="0.9" style="white-space:pre;">%</text><text x="171.80" y="183.40" font-size="24" font-family="'Liberation Sans',sans-serif" font-weight="400" fill="#ffffff" text-anchor="start" stroke="#ffffff" stroke-width="0.9" style="white-space:pre;">%</text><path d="M194.00,174.80 L211.50,174.80 M205.00,167.80 L212.00,174.80 L205.00,181.80" fill="none" stroke="#ffffff" stroke-width="3.00" stroke-linecap="round" stroke-linejoin="round"/><text x="218.10" y="171.70" font-size="12.5" font-family="'Liberation Sans',sans-serif" font-weight="400" fill="#ffffff" text-anchor="start" stroke="#ffffff" stroke-width="0.9" style="white-space:pre;">p</text><line x1="221.40" y1="182.90" x2="234.90" y2="165.40" stroke="#ffffff" stroke-width="2.90"/><text x="229.90" y="185.70" font-size="14.0" font-family="'Liberation Sans',sans-serif" font-weight="700" fill="#ffffff" text-anchor="start" stroke="#ffffff" stroke-width="0.9" style="white-space:pre;">s</text><text x="362.00" y="183.40" font-size="23" font-family="'Liberation Sans',sans-serif" font-weight="700" fill="#ffffff" text-anchor="middle" textLength="89.20" lengthAdjust="spacing" stroke="#ffffff" stroke-width="0.15" style="white-space:pre;">Refresh</text><text x="30.70" y="245.00" font-size="17.5" font-family="'Liberation Sans',sans-serif" font-weight="400" fill="#9ca3af" text-anchor="start" stroke="#9ca3af" stroke-width="0.35" style="white-space:pre;">Graph type</text><text x="30.70" y="274.00" font-size="24" font-family="'Liberation Sans',sans-serif" font-weight="400" fill="#ffffff" text-anchor="start" textLength="152.70" lengthAdjust="spacing" stroke="#ffffff" stroke-width="0.35" style="white-space:pre;">Stacked areas</text><text x="48.10" y="334.80" font-size="23" font-family="'Liberation Sans',sans-serif" font-weight="400" fill="#d1d5db" text-anchor="start" textLength="136.70" lengthAdjust="spacing" stroke="#d1d5db" stroke-width="0.35" style="white-space:pre;">Bidirectional</text><text x="283.80" y="334.80" font-size="23" font-family="'Liberation Sans',sans-serif" font-weight="400" fill="#d1d5db" text-anchor="start" textLength="171.40" lengthAdjust="spacing" stroke="#d1d5db" stroke-width="0.35" style="white-space:pre;">Previous period</text><text x="14.50" y="396.20" font-size="24" font-family="'Liberation Sans',sans-serif" font-weight="700" fill="#9ca3af" text-anchor="start" textLength="126.00" lengthAdjust="spacing" stroke="#9ca3af" stroke-width="0.15" style="white-space:pre;">Time range</text><text x="30.60" y="440.60" font-size="17.5" font-family="'Liberation Sans',sans-serif" font-weight="400" fill="#9ca3af" text-anchor="start" stroke="#9ca3af" stroke-width="0.35" style="white-space:pre;">Presets</text><text x="30.60" y="469.80" font-size="24" font-family="'Liberation Sans',sans-serif" font-weight="400" fill="#ffffff" text-anchor="start" textLength="83.40" lengthAdjust="spacing" stroke="#ffffff" stroke-width="0.35" style="white-space:pre;">Custom</text><text x="128.50" y="469.80" font-size="24" font-family="'Liberation Sans',sans-serif" font-weight="400" fill="#9ca3af" text-anchor="start" textLength="94.00" lengthAdjust="spacing" stroke="#9ca3af" stroke-width="0.35" style="white-space:pre;">Search...</text><text x="30.60" y="528.20" font-size="17.5" font-family="'Liberation Sans',sans-serif" font-weight="400" fill="#3b82f6" text-anchor="start" stroke="#3b82f6" stroke-width="0.35" style="white-space:pre;">Start</text><text x="30.60" y="557.40" font-size="24" font-family="'Liberation Sans',sans-serif" font-weight="400" fill="#ffffff" text-anchor="start" textLength="143.50" lengthAdjust="spacing" stroke="#ffffff" stroke-width="0.35" style="white-space:pre;">36 hours ago</text><text x="30.60" y="615.30" font-size="17.5" font-family="'Liberation Sans',sans-serif" font-weight="400" fill="#9ca3af" text-anchor="start" stroke="#9ca3af" stroke-width="0.35" style="white-space:pre;">End</text><text x="30.60" y="644.20" font-size="24" font-family="'Liberation Sans',sans-serif" font-weight="400" fill="#ffffff" text-anchor="start" textLength="43.50" lengthAdjust="spacing" stroke="#ffffff" stroke-width="0.35" style="white-space:pre;">now</text><text x="14.50" y="706.00" font-size="24" font-family="'Liberation Sans',sans-serif" font-weight="700" fill="#9ca3af" text-anchor="start" textLength="131.50" lengthAdjust="spacing" stroke="#9ca3af" stroke-width="0.15" style="white-space:pre;">Dimensions</text><text x="30.60" y="750.40" font-size="17.5" font-family="'Liberation Sans',sans-serif" font-weight="400" fill="#9ca3af" text-anchor="start" stroke="#9ca3af" stroke-width="0.35" style="white-space:pre;">Dimensions</text><text x="44.50" y="778.70" font-size="24" font-family="'Liberation Sans',sans-serif" font-weight="400" fill="#ffffff" text-anchor="start" textLength="86.00" lengthAdjust="spacing" stroke="#ffffff" stroke-width="0.35" style="white-space:pre;">SrcAddr</text><text x="199.40" y="778.70" font-size="24" font-family="'Liberation Sans',sans-serif" font-weight="400" fill="#ffffff" text-anchor="start" textLength="87.00" lengthAdjust="spacing" stroke="#ffffff" stroke-width="0.35" style="white-space:pre;">DstAddr</text><text x="30.60" y="813.50" font-size="24" font-family="'Liberation Sans',sans-serif" font-weight="400" fill="#9ca3af" text-anchor="start" textLength="94.00" lengthAdjust="spacing" stroke="#9ca3af" stroke-width="0.35" style="white-space:pre;">Search...</text><text x="30.60" y="872.00" font-size="17.5" font-family="'Liberation Sans',sans-serif" font-weight="400" fill="#9ca3af" text-anchor="start" stroke="#9ca3af" stroke-width="0.35" style="white-space:pre;">IPv4 /x</text><text x="30.60" y="901.00" font-size="24" font-family="'Liberation Sans',sans-serif" font-weight="400" fill="#ffffff" text-anchor="start" stroke="#ffffff" stroke-width="0.35" style="white-space:pre;">32</text><text x="183.30" y="872.00" font-size="17.5" font-family="'Liberation Sans',sans-serif" font-weight="400" fill="#9ca3af" text-anchor="start" stroke="#9ca3af" stroke-width="0.35" style="white-space:pre;">IPv6 /x</text><text x="183.30" y="901.00" font-size="24" font-family="'Liberation Sans',sans-serif" font-weight="400" fill="#ffffff" text-anchor="start" stroke="#ffffff" stroke-width="0.35" style="white-space:pre;">128</text><text x="334.60" y="872.00" font-size="17.5" font-family="'Liberation Sans',sans-serif" font-weight="400" fill="#9ca3af" text-anchor="start" stroke="#9ca3af" stroke-width="0.35" style="white-space:pre;">Limit</text><text x="334.60" y="901.00" font-size="24" font-family="'Liberation Sans',sans-serif" font-weight="400" fill="#ffffff" text-anchor="start" stroke="#ffffff" stroke-width="0.35" style="white-space:pre;">10</text><text x="14.50" y="961.70" font-size="24" font-family="'Liberation Sans',sans-serif" font-weight="700" fill="#9ca3af" text-anchor="start" textLength="57.00" lengthAdjust="spacing" stroke="#9ca3af" stroke-width="0.15" style="white-space:pre;">Filter</text><text x="221.60" y="959.80" font-size="22" font-family="'Liberation Mono',monospace" font-weight="400" fill="#9ca3af" text-anchor="start" textLength="121.00" lengthAdjust="spacing" stroke="#9ca3af" stroke-width="0.35" style="white-space:pre;">Ctrl-Enter</text><text x="357.30" y="959.50" font-size="23" font-family="'Liberation Sans',sans-serif" font-weight="400" fill="#9ca3af" text-anchor="start" textLength="98.20" lengthAdjust="spacing" stroke="#9ca3af" stroke-width="0.35" style="white-space:pre;">to execute</text><text x="31.30" y="1024.20" font-size="23.5" font-family="'Liberation Mono',monospace" font-weight="400" fill="#ffffff" text-anchor="start" textLength="324.20" lengthAdjust="spacing" stroke="#ffffff" stroke-width="0.35" style="white-space:pre;"><tspan fill="#f97316" stroke="#f97316">InIfBoundary</tspan> <tspan fill="#0ea5e9" stroke="#0ea5e9">=</tspan> internal</text><text x="30.60" y="1090.20" font-size="17.5" font-family="'Liberation Sans',sans-serif" font-weight="400" fill="#9ca3af" text-anchor="start" stroke="#9ca3af" stroke-width="0.35" style="white-space:pre;">Saved filters</text><text x="30.60" y="1119.00" font-size="24" font-family="'Liberation Sans',sans-serif" font-weight="400" fill="#9ca3af" text-anchor="start" textLength="94.00" lengthAdjust="spacing" stroke="#9ca3af" stroke-width="0.35" style="white-space:pre;">Search...</text><text x="591.80" y="204.00" font-size="20.7" font-family="'Liberation Sans',sans-serif" font-weight="400" fill="#c8c7d8" text-anchor="end" textLength="54.29" lengthAdjust="spacing" stroke="#c8c7d8" stroke-width="0.1" style="white-space:pre;">1.80G</text><text x="591.80" y="327.42" font-size="20.7" font-family="'Liberation Sans',sans-serif" font-weight="400" fill="#c8c7d8" text-anchor="end" textLength="54.29" lengthAdjust="spacing" stroke="#c8c7d8" stroke-width="0.1" style="white-space:pre;">1.50G</text><text x="591.80" y="450.84" font-size="20.7" font-family="'Liberation Sans',sans-serif" font-weight="400" fill="#c8c7d8" text-anchor="end" textLength="54.29" lengthAdjust="spacing" stroke="#c8c7d8" stroke-width="0.1" style="white-space:pre;">1.20G</text><text x="591.80" y="574.26" font-size="20.7" font-family="'Liberation Sans',sans-serif" font-weight="400" fill="#c8c7d8" text-anchor="end" textLength="77.56" lengthAdjust="spacing" stroke="#c8c7d8" stroke-width="0.1" style="white-space:pre;">900.00M</text><text x="591.80" y="697.68" font-size="20.7" font-family="'Liberation Sans',sans-serif" font-weight="400" fill="#c8c7d8" text-anchor="end" textLength="77.56" lengthAdjust="spacing" stroke="#c8c7d8" stroke-width="0.1" style="white-space:pre;">600.00M</text><text x="591.80" y="821.10" font-size="20.7" font-family="'Liberation Sans',sans-serif" font-weight="400" fill="#c8c7d8" text-anchor="end" textLength="77.56" lengthAdjust="spacing" stroke="#c8c7d8" stroke-width="0.1" style="white-space:pre;">300.00M</text><text x="591.80" y="944.52" font-size="20.7" font-family="'Liberation Sans',sans-serif" font-weight="400" fill="#c8c7d8" text-anchor="end" textLength="38.79" lengthAdjust="spacing" stroke="#c8c7d8" stroke-width="0.1" style="white-space:pre;">0.00</text><text x="635.00" y="968.50" font-size="21" font-family="'Liberation Sans',sans-serif" font-weight="700" fill="#c8c7d8" text-anchor="middle" textLength="22.24" lengthAdjust="spacing" stroke="#c8c7d8" stroke-width="0.1" style="white-space:pre;">29</text><text x="897.50" y="968.50" font-size="21" font-family="'Liberation Sans',sans-serif" font-weight="400" fill="#c8c7d8" text-anchor="middle" textLength="50.04" lengthAdjust="spacing" stroke="#c8c7d8" stroke-width="0.1" style="white-space:pre;">04:00</text><text x="1160.00" y="968.50" font-size="21" font-family="'Liberation Sans',sans-serif" font-weight="400" fill="#c8c7d8" text-anchor="middle" textLength="50.04" lengthAdjust="spacing" stroke="#c8c7d8" stroke-width="0.1" style="white-space:pre;">08:00</text><text x="1423.00" y="968.50" font-size="21" font-family="'Liberation Sans',sans-serif" font-weight="400" fill="#c8c7d8" text-anchor="middle" textLength="50.04" lengthAdjust="spacing" stroke="#c8c7d8" stroke-width="0.1" style="white-space:pre;">12:00</text><text x="1685.50" y="968.50" font-size="21" font-family="'Liberation Sans',sans-serif" font-weight="400" fill="#c8c7d8" text-anchor="middle" textLength="50.04" lengthAdjust="spacing" stroke="#c8c7d8" stroke-width="0.1" style="white-space:pre;">16:00</text><text x="1948.00" y="968.50" font-size="21" font-family="'Liberation Sans',sans-serif" font-weight="400" fill="#c8c7d8" text-anchor="middle" textLength="50.04" lengthAdjust="spacing" stroke="#c8c7d8" stroke-width="0.1" style="white-space:pre;">20:00</text><text x="2211.00" y="968.50" font-size="21" font-family="'Liberation Sans',sans-serif" font-weight="700" fill="#c8c7d8" text-anchor="middle" textLength="22.24" lengthAdjust="spacing" stroke="#c8c7d8" stroke-width="0.1" style="white-space:pre;">30</text><text x="2473.50" y="968.50" font-size="21" font-family="'Liberation Sans',sans-serif" font-weight="400" fill="#c8c7d8" text-anchor="middle" textLength="50.04" lengthAdjust="spacing" stroke="#c8c7d8" stroke-width="0.1" style="white-space:pre;">04:00</text><text x="2736.50" y="968.50" font-size="21" font-family="'Liberation Sans',sans-serif" font-weight="400" fill="#c8c7d8" text-anchor="middle" textLength="50.04" lengthAdjust="spacing" stroke="#c8c7d8" stroke-width="0.1" style="white-space:pre;">08:00</text><text x="715.00" y="1055.50" font-size="21.5" font-family="'Liberation Sans',sans-serif" font-weight="700" fill="#e5e7eb" text-anchor="start" textLength="105.75" lengthAdjust="spacing" stroke="#e5e7eb" stroke-width="0.15" style="white-space:pre;">SRC ADDR</text><text x="1241.25" y="1055.50" font-size="21.5" font-family="'Liberation Sans',sans-serif" font-weight="700" fill="#e5e7eb" text-anchor="start" textLength="105.00" lengthAdjust="spacing" stroke="#e5e7eb" stroke-width="0.15" style="white-space:pre;">DST ADDR</text><text x="2003.00" y="1055.50" font-size="21.5" font-family="'Liberation Sans',sans-serif" font-weight="700" fill="#e5e7eb" text-anchor="end" textLength="40.00" lengthAdjust="spacing" stroke="#e5e7eb" stroke-width="0.15" style="white-space:pre;">MIN</text><text x="2320.00" y="1055.50" font-size="21.5" font-family="'Liberation Sans',sans-serif" font-weight="700" fill="#e5e7eb" text-anchor="end" textLength="47.00" lengthAdjust="spacing" stroke="#e5e7eb" stroke-width="0.15" style="white-space:pre;">MAX</text><text x="2637.00" y="1055.50" font-size="21.5" font-family="'Liberation Sans',sans-serif" font-weight="700" fill="#e5e7eb" text-anchor="end" textLength="95.50" lengthAdjust="spacing" stroke="#e5e7eb" stroke-width="0.15" style="white-space:pre;">AVERAGE</text><text x="2954.00" y="1055.50" font-size="21.5" font-family="'Liberation Sans',sans-serif" font-weight="700" fill="#e5e7eb" text-anchor="end" textLength="69.00" lengthAdjust="spacing" stroke="#e5e7eb" stroke-width="0.15" style="white-space:pre;">~95TH</text><text x="715.00" y="1116.20" font-size="24.7" font-family="'Liberation Sans',sans-serif" font-weight="400" fill="#e5e7eb" text-anchor="start" textLength="285.00" lengthAdjust="spacing" stroke="#e5e7eb" stroke-width="0.35" style="white-space:pre;">2001:678:d78:201::1002:2</text><text x="1241.25" y="1116.20" font-size="24.7" font-family="'Liberation Sans',sans-serif" font-weight="400" fill="#e5e7eb" text-anchor="start" textLength="285.00" lengthAdjust="spacing" stroke="#e5e7eb" stroke-width="0.35" style="white-space:pre;">2001:678:d78:201::1033:2</text><text x="2003.00" y="1116.20" font-size="24.7" font-family="'Liberation Sans',sans-serif" font-weight="400" fill="#e5e7eb" text-anchor="end" textLength="139.00" lengthAdjust="spacing" stroke="#e5e7eb" stroke-width="0.35" style="white-space:pre;">394.33Mbps</text><text x="2320.00" y="1116.20" font-size="24.7" font-family="'Liberation Sans',sans-serif" font-weight="400" fill="#e5e7eb" text-anchor="end" textLength="106.00" lengthAdjust="spacing" stroke="#e5e7eb" stroke-width="0.35" style="white-space:pre;">1.07Gbps</text><text x="2637.00" y="1116.20" font-size="24.7" font-family="'Liberation Sans',sans-serif" font-weight="400" fill="#e5e7eb" text-anchor="end" textLength="139.00" lengthAdjust="spacing" stroke="#e5e7eb" stroke-width="0.35" style="white-space:pre;">752.33Mbps</text><text x="2954.00" y="1116.20" font-size="24.7" font-family="'Liberation Sans',sans-serif" font-weight="400" fill="#e5e7eb" text-anchor="end" textLength="105.00" lengthAdjust="spacing" stroke="#e5e7eb" stroke-width="0.35" style="white-space:pre;">1.04Gbps</text><text x="715.00" y="1181.60" font-size="24.7" font-family="'Liberation Sans',sans-serif" font-weight="400" fill="#e5e7eb" text-anchor="start" textLength="149.00" lengthAdjust="spacing" stroke="#e5e7eb" stroke-width="0.35" style="white-space:pre;">192.168.10.33</text><text x="1241.25" y="1181.60" font-size="24.7" font-family="'Liberation Sans',sans-serif" font-weight="400" fill="#e5e7eb" text-anchor="start" textLength="143.75" lengthAdjust="spacing" stroke="#e5e7eb" stroke-width="0.35" style="white-space:pre;">192.168.10.17</text><text x="2003.00" y="1181.60" font-size="24.7" font-family="'Liberation Sans',sans-serif" font-weight="400" fill="#e5e7eb" text-anchor="end" textLength="125.00" lengthAdjust="spacing" stroke="#e5e7eb" stroke-width="0.35" style="white-space:pre;">31.29Mbps</text><text x="2320.00" y="1181.60" font-size="24.7" font-family="'Liberation Sans',sans-serif" font-weight="400" fill="#e5e7eb" text-anchor="end" textLength="139.50" lengthAdjust="spacing" stroke="#e5e7eb" stroke-width="0.35" style="white-space:pre;">682.55Mbps</text><text x="2637.00" y="1181.60" font-size="24.7" font-family="'Liberation Sans',sans-serif" font-weight="400" fill="#e5e7eb" text-anchor="end" textLength="139.00" lengthAdjust="spacing" stroke="#e5e7eb" stroke-width="0.35" style="white-space:pre;">345.13Mbps</text><text x="2954.00" y="1181.60" font-size="24.7" font-family="'Liberation Sans',sans-serif" font-weight="400" fill="#e5e7eb" text-anchor="end" textLength="139.00" lengthAdjust="spacing" stroke="#e5e7eb" stroke-width="0.35" style="white-space:pre;">663.86Mbps</text><text x="715.00" y="1246.85" font-size="24.7" font-family="'Liberation Sans',sans-serif" font-weight="400" fill="#e5e7eb" text-anchor="start" textLength="286.00" lengthAdjust="spacing" stroke="#e5e7eb" stroke-width="0.35" style="white-space:pre;">2001:678:d78:201::1033:2</text><text x="1241.25" y="1246.85" font-size="24.7" font-family="'Liberation Sans',sans-serif" font-weight="400" fill="#e5e7eb" text-anchor="start" textLength="285.00" lengthAdjust="spacing" stroke="#e5e7eb" stroke-width="0.35" style="white-space:pre;">2001:678:d78:201::1002:2</text><text x="2003.00" y="1246.85" font-size="24.7" font-family="'Liberation Sans',sans-serif" font-weight="400" fill="#e5e7eb" text-anchor="end" textLength="109.00" lengthAdjust="spacing" stroke="#e5e7eb" stroke-width="0.35" style="white-space:pre;">1.11Mbps</text><text x="2320.00" y="1246.85" font-size="24.7" font-family="'Liberation Sans',sans-serif" font-weight="400" fill="#e5e7eb" text-anchor="end" textLength="109.50" lengthAdjust="spacing" stroke="#e5e7eb" stroke-width="0.35" style="white-space:pre;">2.90Mbps</text><text x="2637.00" y="1246.85" font-size="24.7" font-family="'Liberation Sans',sans-serif" font-weight="400" fill="#e5e7eb" text-anchor="end" textLength="109.50" lengthAdjust="spacing" stroke="#e5e7eb" stroke-width="0.35" style="white-space:pre;">2.04Mbps</text><text x="2954.00" y="1246.85" font-size="24.7" font-family="'Liberation Sans',sans-serif" font-weight="400" fill="#e5e7eb" text-anchor="end" textLength="109.00" lengthAdjust="spacing" stroke="#e5e7eb" stroke-width="0.35" style="white-space:pre;">2.77Mbps</text><text x="715.00" y="1312.70" font-size="24.7" font-family="'Liberation Sans',sans-serif" font-weight="400" fill="#e5e7eb" text-anchor="start" textLength="144.00" lengthAdjust="spacing" stroke="#e5e7eb" stroke-width="0.35" style="white-space:pre;">192.168.10.17</text><text x="1241.25" y="1312.70" font-size="24.7" font-family="'Liberation Sans',sans-serif" font-weight="400" fill="#e5e7eb" text-anchor="start" textLength="148.75" lengthAdjust="spacing" stroke="#e5e7eb" stroke-width="0.35" style="white-space:pre;">192.168.10.33</text><text x="2003.00" y="1312.70" font-size="24.7" font-family="'Liberation Sans',sans-serif" font-weight="400" fill="#e5e7eb" text-anchor="end" textLength="133.00" lengthAdjust="spacing" stroke="#e5e7eb" stroke-width="0.35" style="white-space:pre;">106.77Kbps</text><text x="2320.00" y="1312.70" font-size="24.7" font-family="'Liberation Sans',sans-serif" font-weight="400" fill="#e5e7eb" text-anchor="end" textLength="108.50" lengthAdjust="spacing" stroke="#e5e7eb" stroke-width="0.35" style="white-space:pre;">1.46Mbps</text><text x="2637.00" y="1312.70" font-size="24.7" font-family="'Liberation Sans',sans-serif" font-weight="400" fill="#e5e7eb" text-anchor="end" textLength="134.00" lengthAdjust="spacing" stroke="#e5e7eb" stroke-width="0.35" style="white-space:pre;">738.83Kbps</text><text x="2954.00" y="1312.70" font-size="24.7" font-family="'Liberation Sans',sans-serif" font-weight="400" fill="#e5e7eb" text-anchor="end" textLength="109.00" lengthAdjust="spacing" stroke="#e5e7eb" stroke-width="0.35" style="white-space:pre;">1.36Mbps</text></svg>
</body></html>
